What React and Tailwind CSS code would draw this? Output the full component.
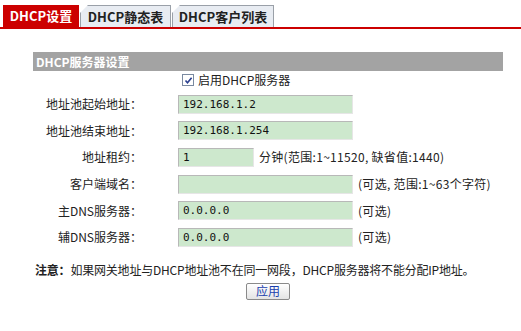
const font = { fontFamily: '"Noto Sans CJK SC", "Liberation Sans", sans-serif' };

function Field({ label, value = "", wide = true, hint }) {
  return (
    <div className="flex h-[26.6px] items-center">
      <div className="w-[109px] text-right text-[12px] text-[#222] whitespace-nowrap">{label}</div>
      <div className="ml-[36px] flex items-center">
        <div
          className={`h-[19px] ${wide ? "w-[175px]" : "w-[76px]"} border border-t-[#b8b8b8] border-l-[#b8b8b8] border-b-[#e6e6e6] border-r-[#e6e6e6] bg-[#cde8cd] pl-[4px] text-[12px] leading-[17px] text-[#111]`}
          style={{ fontFamily: '"DejaVu Sans Mono", "Liberation Mono", monospace', fontSize: "11px" }}
        >
          {value}
        </div>
        {hint && <span className="ml-[5px] text-[12px] tracking-[0.3px] text-[#222] whitespace-nowrap">{hint}</span>}
      </div>
    </div>
  );
}

export default function App() {
  return (
    <div className="h-[331px] w-[521px] bg-white" style={font}>
      {/* tabs */}
      <div className="flex items-end border-b-2 border-[#c00] pl-[3px] pt-[5px]">
        <div className="flex h-[22px] w-[76px] items-center justify-center bg-[#cc0000] text-[13px] font-bold text-white">
          DHCP设置
        </div>
        <div className="ml-[1px] flex h-[22px] w-[91px] items-center justify-center border border-b-0 border-[#9aa0a8] bg-[#e8ecf2] text-[13px] font-bold text-[#222] [clip-path:polygon(8px_0,100%_0,100%_100%,0_100%,0_8px)]">
          DHCP静态表
        </div>
        <div className="ml-[1px] flex h-[22px] w-[102px] items-center justify-center border border-b-0 border-[#9aa0a8] bg-[#e8ecf2] text-[13px] font-bold text-[#222] [clip-path:polygon(8px_0,100%_0,100%_100%,0_100%,0_8px)]">
          DHCP客户列表
        </div>
      </div>

      <div className="pl-[33px] pt-[23px]">
        <div className="flex h-[19px] w-[470px] items-center bg-[#a3a3a3] pl-[3px] text-[12px] font-bold text-white">
          DHCP服务器设置
        </div>

        <div className="flex h-[18px] items-center pl-[149px]">
          <span className="flex h-[12px] w-[12px] items-center justify-center border border-[#7a8aa0] bg-white">
            <svg width="9" height="9" viewBox="0 0 9 9">
              <path d="M1.5 4.5 L3.5 6.8 L7.6 1.8" fill="none" stroke="#2a3f8f" strokeWidth="1.6" />
            </svg>
          </span>
          <span className="ml-[4px] text-[12px] text-[#222]">启用DHCP服务器</span>
        </div>

        <div className="mt-[2px]">
          <Field label="地址池起始地址：" value="192.168.1.2" />
          <Field label="地址池结束地址：" value="192.168.1.254" />
          <Field label="地址租约：" value="1" wide={false} hint="分钟(范围:1~11520, 缺省值:1440)" />
          <Field label="客户端域名：" hint="(可选, 范围:1~63个字符)" />
          <Field label="主DNS服务器：" value="0.0.0.0" hint="(可选)" />
          <Field label="辅DNS服务器：" value="0.0.0.0" hint="(可选)" />
        </div>

        <div className="mt-[10px] pl-[2px] text-[12px] tracking-[-0.2px] text-[#222]">
          <span className="font-bold">注意：</span>如果网关地址与DHCP地址池不在同一网段，DHCP服务器将不能分配IP地址。
        </div>

        <div className="mt-[4px] flex w-[470px] justify-center">
          <button className="h-[17px] w-[44px] rounded-[2px] border border-[#8a8a8a] bg-gradient-to-b from-white to-[#e4e4e4] text-[12px] leading-[14px] text-[#1a3fae]">
            应用
          </button>
        </div>
      </div>
    </div>
  );
}
